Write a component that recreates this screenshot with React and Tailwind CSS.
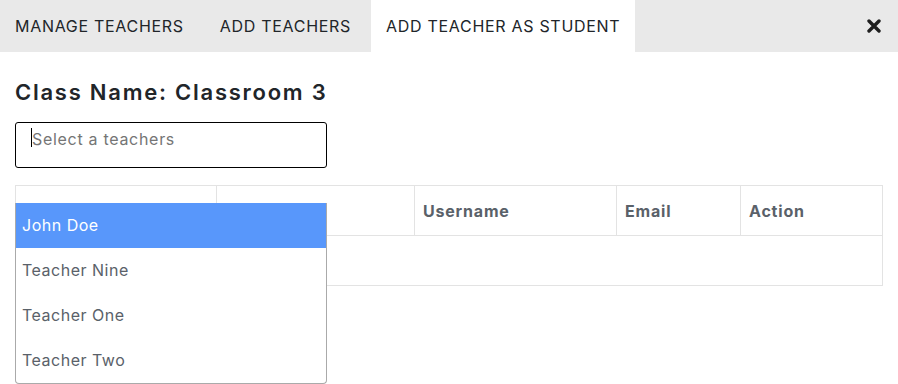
import React from 'react';

const tabs = ['MANAGE TEACHERS', 'ADD TEACHERS', 'ADD TEACHER AS STUDENT'];
const teachers = ['John Doe', 'Teacher Nine', 'Teacher One', 'Teacher Two'];

export default function App() {
  const active = 2;

  return (
    <div className="w-[898px] h-[384px] bg-white overflow-hidden" style={{ fontFamily: 'Inter, "Noto Sans", sans-serif' }}>
      {/* Tabs */}
      <div className="flex h-[52px] bg-[#e9e9e9] items-stretch">
        {tabs.map((t, i) => (
          <div
            key={t}
            className={`flex items-center px-[15px] text-[16px] tracking-[0.7px] text-[#212529] ${i === 1 ? 'ml-[6px]' : ''} ${i === 2 ? 'ml-[5px]' : ''} ${i === active ? 'bg-white' : ''}`}
          >
            {t}
          </div>
        ))}
        <div className="ml-auto flex items-center pr-[17px]">
          <svg width="14" height="14" viewBox="0 0 14 14">
            <path d="M2 2 L12 12 M12 2 L2 12" stroke="#1f1f1f" strokeWidth="3.4" strokeLinecap="round" />
          </svg>
        </div>
      </div>

      <div className="px-[15px]">
        <h2 className="mt-[26px] text-[22px] font-semibold text-[#212529] leading-[28px] tracking-[1.75px]">
          Class Name: Classroom 3
        </h2>

        {/* Select */}
        <div className="relative mt-[16px] w-[312px]">
          <div className="h-[46px] border border-black rounded-[3px] pl-[15px] pt-[4px] text-[16px] tracking-[0.7px] text-[#757575] flex items-start">
            <span className="w-px h-[19px] bg-black mt-[1px]"></span>
            <span>Select a teachers</span>
          </div>

          {/* Dropdown */}
          <div className="absolute left-0 top-[81px] w-[312px] bg-white border border-[#aaa] border-t-0 rounded-b-[4px] z-10">
            {teachers.map((t, i) => (
              <div
                key={t}
                className={`h-[45px] flex items-center pl-[6px] pb-[1px] text-[16px] tracking-[0.5px] ${i === 0 ? 'bg-[#5897fb] text-white' : 'text-[#5a6169]'}`}
              >
                {t}
              </div>
            ))}
          </div>
        </div>

        {/* Table */}
        <table className="mt-[17px] w-[868px] border-collapse text-[16px] tracking-[0.8px]">
          <thead>
            <tr className="h-[50px]">
              <th className="w-[201px] border border-[#e3e3e3] text-left px-[8px] font-bold text-[#5a6169]">#</th>
              <th className="w-[198px] border border-[#e3e3e3] text-left px-[8px] font-bold text-[#5a6169]">Name</th>
              <th className="w-[202px] border border-[#e3e3e3] text-left px-[8px] font-bold text-[#5a6169]">Username</th>
              <th className="w-[124px] border border-[#e3e3e3] text-left px-[8px] font-bold text-[#5a6169]">Email</th>
              <th className="border border-[#e3e3e3] text-left px-[8px] font-bold text-[#5a6169]">Action</th>
            </tr>
          </thead>
          <tbody>
            <tr className="h-[50px]">
              <td colSpan={5} className="border border-[#e3e3e3]"></td>
            </tr>
          </tbody>
        </table>
      </div>
    </div>
  );
}
